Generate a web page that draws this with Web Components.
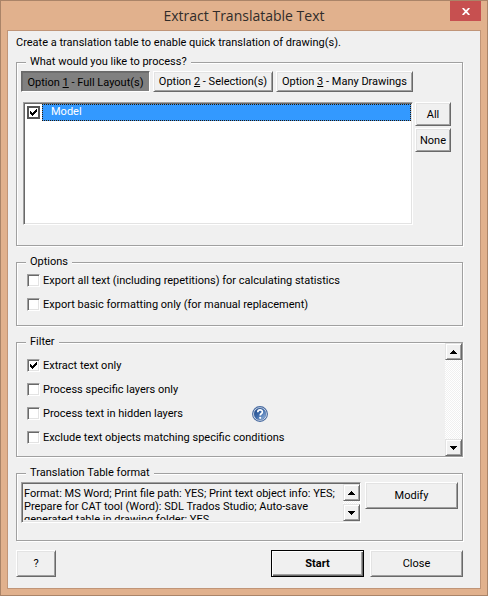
<!DOCTYPE html>
<html lang="en">
<head>
<meta charset="utf-8">
<title>Extract Translatable Text</title>
<style>
  html, body { margin: 0; min-height: 100%; }
  body {
    font: 11px/14px Roboto, "Liberation Sans", sans-serif;
    color: #000;
    background: #e1b18d;
  }
  .tabs { display: flex; gap: 3px; margin-bottom: 10px; }
  .pick { display: flex; gap: 2px; margin-left: 2px; padding-right: 7px; }
  .pick layout-list { flex: 1; }
  .stack { display: flex; flex-direction: column; gap: 2px; width: 36px; }
  .options { padding: 0 4px 8px 10px; }
  .filter { display: flex; }
  .filter .checks { flex: 1; padding: 5px 0 6px 10px; }
  .filter scroll-bar { margin-top: -6px; }
  .row { display: flex; align-items: center; }
  .row check-field { flex: 0 0 225px; }
  .table-format { display: flex; align-items: flex-start; gap: 4px; padding: 2px 4px 17px; }
  .table-format summary-box { flex: 1; }
  .wide { width: 93px; }
  .small { width: 40px; }
  .inset { padding: 2px 4px 20px; }
  .actions { display: flex; gap: 6px; }
  .actions .small { margin-right: auto; }
</style>
</head>
<body>
<dialog-window heading="Extract Translatable Text">
  <span slot="intro">Create a translation table to enable quick translation of drawing(s).</span>

  <group-box legend="What would you like to process?">
    <div class="inset">
      <div class="tabs">
        <push-button kind="tab" pressed style="--w:129px">Option <u>1</u> - Full Layout(s)</push-button>
        <push-button kind="tab" style="--w:120px">Option <u>2</u> - Selection(s)</push-button>
        <push-button kind="tab" style="--w:137px">Option <u>3</u> - Many Drawings</push-button>
      </div>
      <div class="pick">
        <layout-list item="Model"></layout-list>
        <div class="stack">
          <push-button kind="side">All</push-button>
          <push-button kind="side">None</push-button>
        </div>
      </div>
    </div>
  </group-box>

  <group-box legend="Options">
    <div class="options">
      <check-field label="Export all text (including repetitions) for calculating statistics"></check-field>
      <check-field label="Export basic formatting only (for manual replacement)"></check-field>
    </div>
  </group-box>

  <group-box legend="Filter">
    <div class="filter">
      <div class="checks">
        <check-field label="Extract text only" checked></check-field>
        <check-field label="Process specific layers only"></check-field>
        <div class="row">
          <check-field label="Process text in hidden layers"></check-field>
          <help-button></help-button>
        </div>
        <check-field label="Exclude text objects matching specific conditions"></check-field>
      </div>
      <scroll-bar></scroll-bar>
    </div>
  </group-box>

  <group-box legend="Translation Table format">
    <div class="table-format">
      <summary-box text="Format: MS Word; Print file path: YES; Print text object info: YES; Prepare for CAT tool (Word): SDL Trados Studio; Auto-save generated table in drawing folder: YES"></summary-box>
      <push-button class="wide">Modify</push-button>
    </div>
  </group-box>

  <div class="actions">
    <push-button class="small">?</push-button>
    <push-button class="wide" primary>Start</push-button>
    <push-button class="wide">Close</push-button>
  </div>
</dialog-window>

<script>
const define = (name, render, setup) => customElements.define(name, class extends HTMLElement {
  connectedCallback() {
    if (this.shadowRoot) return;
    this.attachShadow({ mode: "open" }).innerHTML = render(this);
    if (setup) setup(this, this.shadowRoot);
  }
});

define("dialog-window", el => `
  <style>
    :host { display: flex; flex-direction: column; box-sizing: border-box; min-height: 100vh;
      border: 1px solid #aa8468; padding: 0 6px 6px; background: #e1b18d; }
    header { display: grid; grid-template-columns: 1fr auto; height: 29px; }
    h1 { grid-area: 1 / 1 / 2 / 3; margin: 0; text-align: center; color: #302c2a;
      font: 14px/30px "Open Sans", "Noto Sans", sans-serif; }
    .x { grid-area: 1 / 2; width: 31px; height: 20px; padding: 0; border: 0;
      background: #c75050; display: grid; place-items: center; }
    main { flex: 1; display: flex; flex-direction: column; gap: 9px; background: #f0f0f0;
      border: 1px solid #c09578; padding: 5px 17px 11px 8px; }
    p { margin: 0 0 -4px; line-height: 14px; }
  </style>
  <header>
    <h1>${el.getAttribute("heading")}</h1>
    <button class="x" aria-label="Close window"><svg width="8" height="7" viewBox="0 0 8 7"><path d="M.7 0 7.3 7M7.3 0 .7 7" stroke="#fff" stroke-width="1.8"/></svg></button>
  </header>
  <main><p><slot name="intro"></slot></p><slot></slot></main>`);

define("group-box", el => `
  <style>
    :host { display: block; }
    fieldset { margin: 0; min-width: 0; padding: 0; border: 1px solid #a0a0a0;
      box-shadow: 1px 1px 0 #fff, inset 1px 1px 0 #fff; }
    legend { position: relative; height: 14px; line-height: 14px; margin-left: 9px;
      padding: 0 4px; background: #f0f0f0; }
  </style>
  <fieldset><legend>${el.getAttribute("legend")}</legend><slot></slot></fieldset>`);

define("push-button", () => `
  <style>
    :host { display: block; }
    button { display: block; box-sizing: border-box; width: var(--w, 100%); height: 27px; padding: 0;
      font: inherit; color: #000; background: #f0f0f0; white-space: nowrap;
      border: 1px solid; border-color: #fff #696969 #696969 #fff;
      box-shadow: inset 1px 1px 0 #e3e3e3, inset -1px -1px 0 #a0a0a0; }
    :host([kind=tab]) button { height: 21px; }
    :host([kind=side]) button { height: 24px; padding-top: 2px; }
    :host([pressed]) button { background: #808080; border-color: #696969 #fff #fff #696969;
      box-shadow: inset 1px 1px 0 #6e6e6e; padding-top: 2px; }
    :host([primary]) button { font-weight: bold; border-color: #000;
      box-shadow: inset 1px 1px 0 #fff, inset -1px -1px 0 #696969, inset -2px -2px 0 #a0a0a0; }
  </style>
  <button type="button"><slot></slot></button>`);

const checkStyle = `
  input { appearance: none; flex: none; box-sizing: border-box; width: 13px; height: 13px; margin: 0;
    background: #fff; border: 1px solid; border-color: #a0a0a0 #fff #fff #a0a0a0;
    box-shadow: inset 1px 1px 0 #696969, inset -1px -1px 0 #e3e3e3; }
  .box { display: grid; flex: none; }
  .box > * { grid-area: 1 / 1; }
  .box svg { pointer-events: none; visibility: hidden; place-self: center; }
  input:checked + svg { visibility: visible; }`;
const tick = `<svg width="7" height="7" viewBox="0 0 7 7" shape-rendering="crispEdges"><path d="M0 2h1v1h1v1h1v-1h1v-1h1v-1h1v-1h1v3h-1v1h-1v1h-1v1h-1v1h-1v-1h-1v-1h-1z"/></svg>`;

define("check-field", el => `
  <style>
    :host { display: block; }
    label { display: flex; align-items: center; gap: 3px; height: 24px; white-space: nowrap; }
    ${checkStyle}
    .box { margin-bottom: 1px; }
  </style>
  <label><span class="box"><input type="checkbox" ${el.hasAttribute("checked") ? "checked" : ""}>${tick}</span><span>${el.getAttribute("label")}</span></label>`);

define("layout-list", el => `
  <style>
    :host { display: block; box-sizing: border-box; min-height: 123px; background: #fff;
      border: 1px solid; border-color: #a0a0a0 #fff #fff #a0a0a0;
      box-shadow: inset 1px 1px 0 #696969, inset -1px -1px 0 #e3e3e3; padding: 1px; }
    label { display: flex; align-items: center; height: 17px; gap: 2px; padding-left: 2px; }
    .name { flex: 1; box-sizing: border-box; height: 17px; line-height: 13px; padding-left: 8px;
      color: #fff; background: #3399ff; border: 1px dotted #2a1a08; }
    ${checkStyle}
    input { border: 2px solid #555; box-shadow: none; }
  </style>
  <label><span class="box"><input type="checkbox" checked>${tick}</span><span class="name">${el.getAttribute("item")}</span></label>`);

define("scroll-bar", () => `
  <style>
    :host { display: flex; flex-direction: column; justify-content: space-between; width: 17px;
      background: repeating-conic-gradient(#fff 0 25%, #f0f0f0 0 50%) 0 0 / 2px 2px; }
    button { display: grid; place-items: center; box-sizing: border-box; width: 17px; height: 17px;
      padding: 0; background: #f0f0f0; border: 1px solid; border-color: #e3e3e3 #696969 #696969 #e3e3e3;
      box-shadow: inset 1px 1px 0 #fff, inset -1px -1px 0 #a0a0a0; }
  </style>
  <button type="button" aria-label="Scroll up"><svg width="7" height="4" viewBox="0 0 7 4" shape-rendering="crispEdges"><path d="M3 0h1v1h1v1h1v1h1v1H0V3h1V2h1V1h1z"/></svg></button>
  <button type="button" aria-label="Scroll down"><svg width="7" height="4" viewBox="0 0 7 4" shape-rendering="crispEdges"><path d="M0 0h7v1H6v1H5v1H4v1H3V3H2V2H1V1H0z"/></svg></button>`);

define("help-button", () => `
  <style>
    :host { display: block; }
    button { display: block; padding: 0; border: 0; background: none; }
    svg { display: block; }
  </style>
  <button type="button" aria-label="Help"><svg width="16" height="16" viewBox="0 0 16 16">
    <defs><linearGradient id="g" x1="0" y1="0" x2="1" y2="1"><stop offset="0" stop-color="#1f4684"/><stop offset=".5" stop-color="#3f6cab"/><stop offset="1" stop-color="#a9c4e6"/></linearGradient></defs>
    <circle cx="8" cy="8" r="7.4" fill="#fff" stroke="#46699f" stroke-width="1.1"/>
    <circle cx="8" cy="8" r="6" fill="url(#g)" stroke="#3a609c" stroke-width=".5"/>
    <path d="M5.8 6.2C5.8 3.2 10.4 3.3 10.4 5.9 10.4 7.6 8.2 7.5 8.2 9.6" fill="none" stroke="#fff" stroke-width="1.7"/>
    <circle cx="8.2" cy="11.8" r="1.1" fill="#fff"/>
  </svg></button>`);

define("summary-box", el => `
  <style>
    :host { display: flex; box-sizing: border-box; height: 41px; background: #f0f0f0;
      border: 1px solid; border-color: #a0a0a0 #fff #fff #a0a0a0;
      box-shadow: inset 1px 1px 0 #696969, inset -1px -1px 0 #e3e3e3; padding: 1px 0 1px 1px; }
    textarea { flex: 1; min-width: 0; height: 33px; margin: 3px 0 0; padding: 0 0 0 1px; border: 0; outline: 0;
      resize: none; overflow: hidden; background: none; color: #000; font: inherit; line-height: 13px; }
  </style>
  <textarea readonly aria-label="Translation table format"></textarea><scroll-bar></scroll-bar>`,
  (el, root) => { root.querySelector("textarea").value = el.getAttribute("text"); });
</script>
</body>
</html>
